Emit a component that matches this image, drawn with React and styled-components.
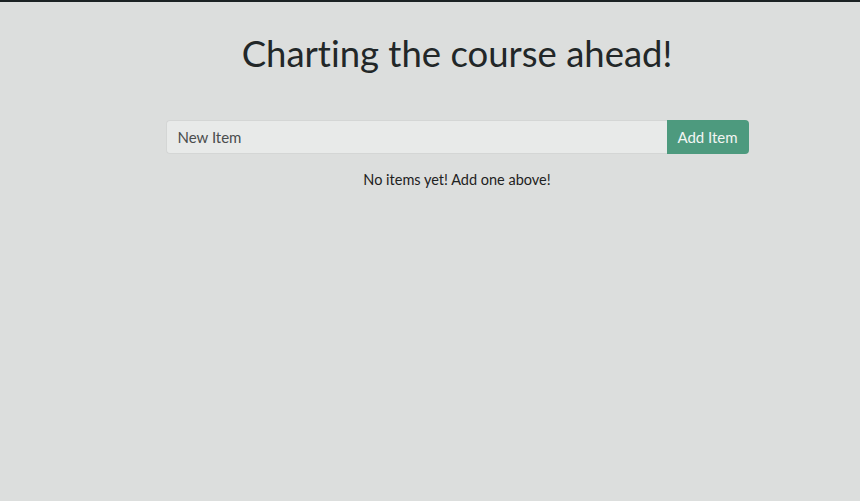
import { useState } from "react";
import styled, { createGlobalStyle } from "styled-components";

const GlobalStyle = createGlobalStyle`
  html, body {
    margin: 0;
    padding: 0;
    background: #dcdedd;
    font-family: Lato, "Open Sans", sans-serif;
    font-variant-ligatures: none;
    color: #222;
  }
`;

const TopBar = styled.div`
  height: 2px;
  background: #1b2224;
`;

const Page = styled.main`
  min-height: 499px;
  padding-left: 54px;
  display: flex;
  flex-direction: column;
  align-items: center;
`;

const Title = styled.h1`
  margin: 29px 0 0;
  font-size: 36.5px;
  font-weight: 400;
  line-height: 44px;
  color: #222728;
`;

const Form = styled.form`
  display: flex;
  width: 583px;
  margin-top: 45px;
`;

const Input = styled.input`
  flex: 1;
  height: 34px;
  box-sizing: border-box;
  padding: 0 11px;
  border: 1px solid #d4d6d5;
  border-right: none;
  border-radius: 4px 0 0 4px;
  background: #e8eae9;
  font-family: Lato, sans-serif;
  font-size: 15px;
  color: #333;
  outline: none;

  &::placeholder {
    color: #4a4d4d;
  }
`;

const Button = styled.button`
  width: 82px;
  height: 34px;
  border: none;
  border-radius: 0 4px 4px 0;
  background: #4d9a7e;
  color: #f2f5f3;
  font-family: Lato, sans-serif;
  font-size: 15px;
  cursor: pointer;
`;

const Empty = styled.p`
  margin: 17px 0 0;
  font-size: 14.5px;
  color: #1e2222;
`;

const List = styled.ul`
  width: 583px;
  padding: 0;
  list-style: none;
`;

export default function App() {
  const [items, setItems] = useState([]);
  const [text, setText] = useState("");

  const handleSubmit = (e) => {
    e.preventDefault();
    if (!text.trim()) return;
    setItems([...items, text]);
    setText("");
  };

  return (
    <>
      <GlobalStyle />
      <TopBar />
      <Page>
        <Title>Charting the course ahead!</Title>
        <Form onSubmit={handleSubmit}>
          <Input placeholder="New Item" value={text} onChange={(e) => setText(e.target.value)} />
          <Button type="submit">Add Item</Button>
        </Form>
        {items.length ? (
          <List>
            {items.map((item, i) => (
              <li key={i}>{item}</li>
            ))}
          </List>
        ) : (
          <Empty>No items yet! Add one above!</Empty>
        )}
      </Page>
    </>
  );
}
